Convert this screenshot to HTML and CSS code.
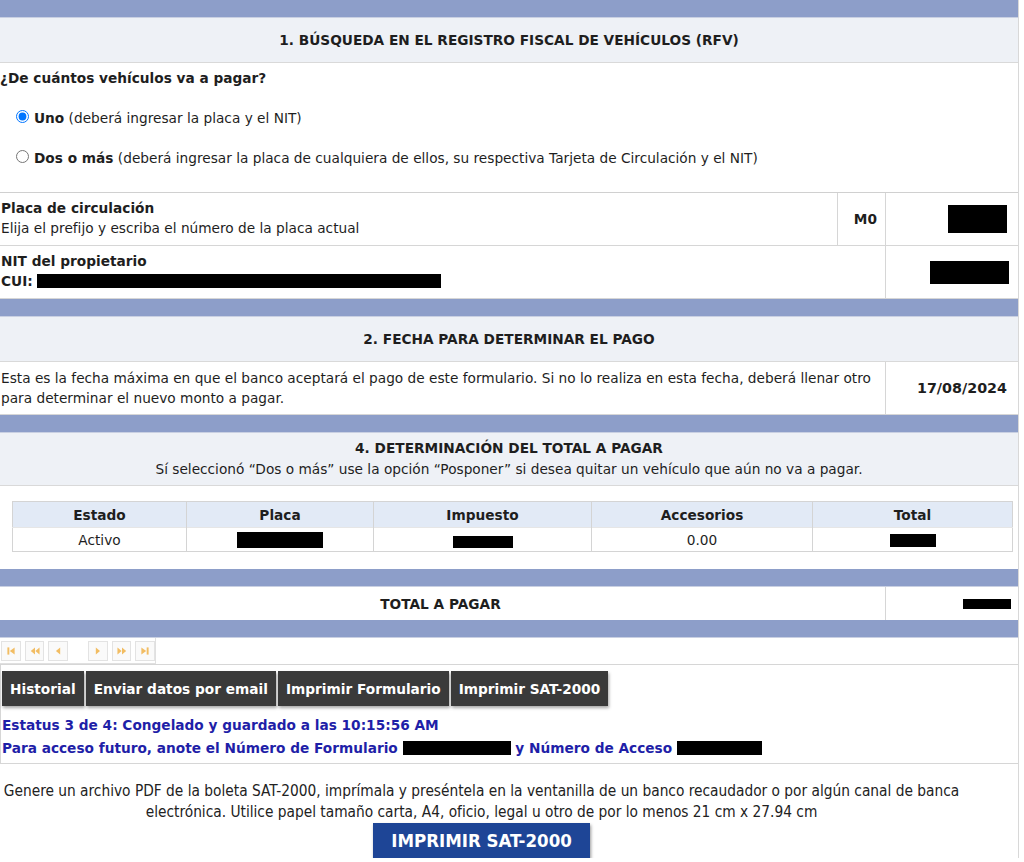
FILE: index.html
```html
<!DOCTYPE html>
<html lang="es">
<head>
<meta charset="utf-8">
<title>RFV</title>
<link rel="stylesheet" href="styles.css">
</head>
<body>
<div class="page">
  <div class="bar"></div>
  <div class="sec-head">1. BÚSQUEDA EN EL REGISTRO FISCAL DE VEHÍCULOS (RFV)</div>
  <div class="question">
    <div class="q-title">¿De cuántos vehículos va a pagar?</div>
    <label class="opt"><input type="radio" name="n" checked><b>Uno</b>&nbsp;(deberá ingresar la placa y el NIT)</label>
    <label class="opt"><input type="radio" name="n"><b>Dos o más</b>&nbsp;(deberá ingresar la placa de cualquiera de ellos, su respectiva Tarjeta de Circulación y el NIT)</label>
  </div>
  <div class="row row-placa">
    <div class="cell-main"><b>Placa de circulación</b><br>Elija el prefijo y escriba el número de la placa actual</div>
    <div class="cell-prefix">M0</div>
    <div class="cell-val"><span class="redact r-placa"></span></div>
  </div>
  <div class="row row-nit">
    <div class="cell-main"><b>NIT del propietario</b><br><b>CUI:</b> <span class="redact r-cui"></span></div>
    <div class="cell-val"><span class="redact r-nit"></span></div>
  </div>
  <div class="bar"></div>
  <div class="sec-head">2. FECHA PARA DETERMINAR EL PAGO</div>
  <div class="row row-fecha">
    <div class="cell-main">Esta es la fecha máxima en que el banco aceptará el pago de este formulario. Si no lo realiza en esta fecha, deberá llenar otro para determinar el nuevo monto a pagar.</div>
    <div class="cell-val date">17/08/2024</div>
  </div>
  <div class="bar"></div>
  <div class="sec-head two">4. DETERMINACIÓN DEL TOTAL A PAGAR<span class="sub">Sí seleccionó “Dos o más” use la opción “Posponer” si desea quitar un vehículo que aún no va a pagar.</span></div>
  <div class="table-wrap">
    <table class="veh">
      <thead>
        <tr><th class="c1">Estado</th><th class="c2">Placa</th><th class="c3">Impuesto</th><th class="c4">Accesorios</th><th>Total</th></tr>
      </thead>
      <tbody>
        <tr><td>Activo</td><td><span class="redact r-tplaca"></span></td><td><span class="redact r-timp"></span></td><td>0.00</td><td><span class="redact r-ttot"></span></td></tr>
      </tbody>
    </table>
  </div>
  <div class="bar"></div>
  <div class="row row-total">
    <div class="cell-main total-label">TOTAL A PAGAR</div>
    <div class="cell-val"><span class="redact r-total"></span></div>
  </div>
  <div class="bar"></div>
  <div class="pager">
    <span class="pg"><svg viewBox="0 0 10 10"><rect x="2" y="2" width="1.6" height="6"/><path d="M8 2 L4 5 L8 8Z"/></svg></span>
    <span class="pg"><svg viewBox="0 0 10 10"><path d="M5 2 L1.5 5 L5 8Z M8.8 2 L5.3 5 L8.8 8Z"/></svg></span>
    <span class="pg"><svg viewBox="0 0 10 10"><path d="M6.8 2 L3.3 5 L6.8 8Z"/></svg></span>
    <span class="pg gap"><svg viewBox="0 0 10 10"><path d="M3.2 2 L6.7 5 L3.2 8Z"/></svg></span>
    <span class="pg"><svg viewBox="0 0 10 10"><path d="M1.2 2 L4.7 5 L1.2 8Z M5 2 L8.5 5 L5 8Z"/></svg></span>
    <span class="pg"><svg viewBox="0 0 10 10"><path d="M2 2 L6 5 L2 8Z"/><rect x="6.4" y="2" width="1.6" height="6"/></svg></span>
  </div>
  <div class="actions">
    <div class="btns">
      <span class="btn">Historial</span>
      <span class="btn">Enviar datos por email</span>
      <span class="btn">Imprimir Formulario</span>
      <span class="btn">Imprimir SAT-2000</span>
    </div>
    <div class="status">Estatus 3 de 4: Congelado y guardado a las 10:15:56 AM</div>
    <div class="status">Para acceso futuro, anote el Número de Formulario <span class="redact r-form"></span> y Número de Acceso <span class="redact r-acc"></span></div>
  </div>
  <div class="footer">
    <p>Genere un archivo PDF de la boleta SAT-2000, imprímala y preséntela en la ventanilla de un banco recaudador o por algún canal de banca electrónica. Utilice papel tamaño carta, A4, oficio, legal u otro de por lo menos 21 cm x 27.94 cm</p>
    <span class="big-btn">IMPRIMIR SAT-2000</span>
  </div>
</div>
</body>
</html>
```

FILE: styles.css
```css
html, body {
  margin: 0;
  padding: 0;
  background: #fff;
}
body {
  font-family: "DejaVu Sans", Verdana, sans-serif;
  font-size: 13.7px;
  color: #1e1e1e;
}
.page {
  width: 1018px;
  border-right: 1px solid #d8d8d8;
}
.bar {
  height: 17px;
  background: #8d9ec9;
  border-bottom: 1px solid #c9d0e2;
}
.sec-head {
  background: #eef1f6;
  height: 44px;
  display: flex;
  align-items: center;
  justify-content: center;
  font-weight: bold;
  border-bottom: 1px solid #d9d9d9;
}
.sec-head.two {
  flex-direction: column;
  height: 52px;
  line-height: 21px;
}
.sec-head .sub {
  font-weight: normal;
}
.question {
  height: 130px;
  border-bottom: 1px solid #d0d0d0;
  padding-top: 6px;
  box-sizing: border-box;
}
.q-title {
  font-weight: bold;
  line-height: 18px;
}
.opt {
  display: flex;
  align-items: center;
  margin-left: 13px;
  height: 20px;
  margin-top: 21px;
}
.opt + .opt {
  margin-top: 20px;
}
.opt input {
  width: 13px;
  height: 13px;
  margin: -4px 5px 0 3px;
}
.row {
  display: flex;
  border-bottom: 1px solid #d6d6d6;
}
.cell-main {
  flex: 1;
  line-height: 20px;
  padding: 5px 0 0 1px;
}
.cell-prefix {
  width: 48px;
  border-left: 1px solid #d6d6d6;
  display: flex;
  align-items: center;
  justify-content: flex-end;
  padding-right: 8px;
  box-sizing: border-box;
  font-weight: bold;
}
.cell-val {
  width: 133px;
  border-left: 1px solid #d6d6d6;
  display: flex;
  align-items: center;
  justify-content: flex-end;
  padding-right: 11px;
  box-sizing: border-box;
}
.row-placa { height: 53px; box-sizing: border-box; }
.row-nit { height: 53px; box-sizing: border-box; }
.row-nit .cell-val { padding-right: 9px; }
.row-fecha { height: 53px; box-sizing: border-box; }
.row-fecha .cell-main { padding-top: 6px; }
.date { font-weight: bold; font-size: 14.3px; }
.redact {
  display: inline-block;
  background: #000;
  vertical-align: middle;
}
.r-placa { width: 59px; height: 28px; }
.r-cui { width: 404px; height: 14px; margin-top: -3px; }
.r-nit { width: 79px; height: 23px; }
.r-tplaca { width: 86px; height: 16px; }
.r-timp { width: 60px; height: 12px; margin-top: 4px; }
.r-ttot { width: 46px; height: 13px; }
.r-total { width: 48px; height: 10px; }
.r-form { width: 108px; height: 14px; margin-top: -3px; }
.r-acc { width: 85px; height: 14px; margin-top: -3px; }
.table-wrap {
  height: 83px;
  padding: 15px 5px 0 12px;
  box-sizing: border-box;
}
.veh {
  width: 1001px;
  border-collapse: collapse;
  border: 1px solid #d4d4d4;
}
.veh th {
  background: #e2eaf6;
  height: 25px;
  padding: 0;
  font-weight: bold;
  border-left: 1px solid #d4d4d4;
}
.veh th:first-child { border-left: none; }
.veh td {
  height: 23px;
  padding: 0;
  text-align: center;
  border-left: 1px solid #d4d4d4;
  border-top: 1px solid #e6e6e6;
}
.veh td:first-child { border-left: none; }
.veh .c1 { width: 173px; }
.veh .c2 { width: 186px; }
.veh .c3 { width: 217px; }
.veh .c4 { width: 220px; }
.row-total { height: 33px; box-sizing: border-box; border-bottom: none; }
.total-label {
  font-weight: bold;
  padding: 0 0 0 1px;
  display: flex;
  align-items: center;
  justify-content: center;
  margin-left: -5px;
}
.row-total .cell-val { padding-right: 7px; }
.pager {
  width: 156px;
  height: 26px;
  display: flex;
  align-items: center;
  gap: 4px;
  padding-left: 1px;
  border-right: 1px solid #e0e0e0;
  border-bottom: 1px solid #e0e0e0;
  box-sizing: border-box;
}
.pg {
  width: 20px;
  height: 20px;
  border: 1px solid #e3e3e3;
  box-sizing: border-box;
  display: flex;
  align-items: center;
  justify-content: center;
  background: #fafafa;
}
.pg.gap { margin-left: 16px; }
.pg svg {
  width: 12px;
  height: 12px;
  fill: #f2bd63;
}
.actions {
  border: 1px solid #d6d6d6;
  border-right: none;
  height: 100px;
  box-sizing: border-box;
  padding: 6px 0 0 1px;
}
.btns {
  display: flex;
  gap: 2px;
  margin-bottom: 8px;
}
.btn {
  background: #3a3a3a;
  color: #fff;
  font-weight: bold;
  height: 35px;
  display: flex;
  align-items: center;
  padding: 0 8px;
  box-shadow: 1px 2px 3px rgba(0,0,0,0.35);
}
.status {
  color: #1f1fa8;
  font-weight: bold;
  line-height: 23px;
}
.footer {
  width: 963px;
  text-align: center;
  padding-top: 17px;
}
.footer p {
  margin: 0;
  line-height: 21px;
  font-family: "DejaVu Sans Condensed", "DejaVu Sans", sans-serif;
  font-size: 15.3px;
  color: #222;
}
.big-btn {
  display: block;
  margin: 0 auto;
  background: #1e4596;
  color: #fff;
  font-family: "DejaVu Sans Condensed", "DejaVu Sans", sans-serif;
  font-weight: bold;
  font-size: 18.5px;
  width: 217px;
  height: 35px;
  line-height: 35px;
  box-shadow: 1px 2px 3px rgba(0,0,0,0.4);
}
```
